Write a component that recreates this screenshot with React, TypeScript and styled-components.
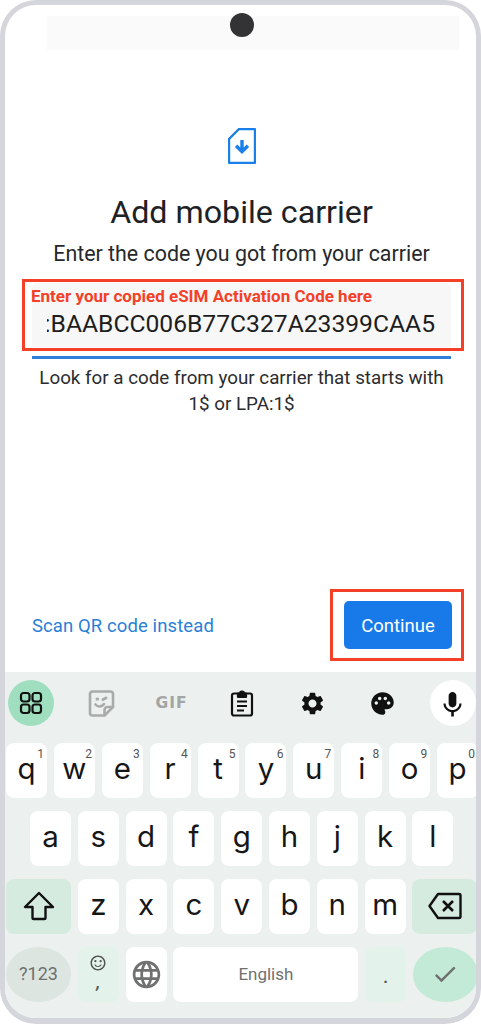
import React from "react";
import styled, { createGlobalStyle } from "styled-components";
import {
  MdSettings,
  MdPalette,
  MdKeyboardVoice,
  MdOutlineSentimentSatisfied,
  MdLanguage,
  MdCheck,
} from "react-icons/md";

const Global = createGlobalStyle`
  html, body { margin: 0; padding: 0; background: #fff; }
  body { font-family: Roboto, "Liberation Sans", sans-serif; }
`;

const Frame = styled.div`
  box-sizing: border-box;
  width: 481px;
  height: 1024px;
  border: 5px solid #d5d5dc;
  border-bottom-width: 6px;
  border-radius: 36px;
  overflow: hidden;
  position: relative;
  display: flex;
  flex-direction: column;
  background: #fff;
`;
const Camera = styled.div`
  position: absolute;
  top: 8px;
  left: 225px;
  width: 24px;
  height: 24px;
  border-radius: 50%;
  background: #333335;
`;
const StatusBar = styled.div`
  height: 34px;
  margin: 11px 17px 0 42px;
  background: #fafafa;
`;
const Main = styled.main`
  flex: 1;
  display: flex;
  flex-direction: column;
  align-items: center;
  padding-top: 78px;
  color: #222;
`;
const CenterBlock = styled.div`
  display: flex;
  flex-direction: column;
  align-items: center;
  padding-left: 2px;
`;
const SimIcon = styled.svg`
  display: block;
  width: 28px;
  height: 36px;
`;
const Title = styled.h1`
  margin: 28px 0 0;
  font-size: 32.2px;
  font-weight: 400;
  line-height: 40px;
  color: #202124;
`;
const Subtitle = styled.p`
  margin: 9px 0 0;
  font-size: 21.4px;
  line-height: 26px;
  color: #27282b;
  white-space: nowrap;
`;
const FieldHighlight = styled.div`
  box-sizing: border-box;
  align-self: flex-start;
  margin: 12px 0 0 17px;
  width: 442px;
  height: 72px;
  border: 3px solid #f44027;
  padding: 1px 10px 0 7px;
`;
const Field = styled.div`
  box-sizing: border-box;
  height: 64px;
  background: #f7f7f8;
  border-radius: 5px 5px 0 0;
  display: flex;
  flex-direction: column;
`;
const RedLabel = styled.div`
  font-size: 17px;
  font-weight: 700;
  line-height: 18px;
  margin: 4px 0 0 -1px;
  color: #f44027;
  white-space: nowrap;
`;
const CodeClip = styled.div`
  display: flex;
  justify-content: flex-end;
  overflow: hidden;
  margin: 4px 16px 0 15px;
`;
const Code = styled.div`
  flex-shrink: 0;
  font-size: 24.65px;
  line-height: 30px;
  color: #1d1d20;
  white-space: nowrap;
`;
const Underline = styled.div`
  align-self: flex-start;
  width: 419px;
  height: 3px;
  margin: 5px 0 0 27px;
  background: #2d7fd8;
`;
const Help = styled.p`
  margin: 6px 0 0;
  padding-left: 2px;
  font-size: 18.8px;
  line-height: 26px;
  text-align: center;
  color: #2b2c2f;
  width: 440px;
`;
const Actions = styled.div`
  align-self: stretch;
  margin-top: auto;
  margin-bottom: 11px;
  display: flex;
  align-items: center;
  justify-content: space-between;
  padding: 0 12px 0 27px;
`;
const ScanLink = styled.a`
  font-size: 18.5px;
  color: #2a7fd6;
  letter-spacing: 0.1px;
  padding-top: 2px;
`;
const ContinueHighlight = styled.div`
  box-sizing: border-box;
  width: 134px;
  height: 72px;
  border: 3px solid #f44027;
  padding: 9px 9px 0 11px;
`;
const ContinueButton = styled.div`
  height: 48px;
  padding-top: 1px;
  box-sizing: border-box;
  border-radius: 5px;
  background: #177ae8;
  color: #fff;
  font-size: 18.5px;
  display: flex;
  align-items: center;
  justify-content: center;
`;
const Keyboard = styled.section`
  height: 346px;
  flex-shrink: 0;
  box-sizing: border-box;
  background: #ecf1ef;
  padding-top: 8px;
  display: flex;
  flex-direction: column;
`;
const Toolbar = styled.div`
  display: flex;
  justify-content: space-between;
  padding-left: 3px;
  margin-bottom: 17px;
`;
const ToolSlot = styled.div<{ $bg?: string; $color?: string }>`
  width: 46px;
  height: 46px;
  border-radius: 50%;
  flex-shrink: 0;
  display: flex;
  align-items: center;
  justify-content: center;
  background: ${(p) => p.$bg || "transparent"};
  color: ${(p) => p.$color || "#111"};
`;
const GifLabel = styled.span`
  font-family: "DejaVu Sans", sans-serif;
  font-size: 15.5px;
  font-weight: 700;
  letter-spacing: 1px;
  color: #a3a5a4;
`;
const Rows = styled.div`
  display: flex;
  flex-direction: column;
  gap: 13.5px;
`;
const Row = styled.div<{ $gap: number; $left: number }>`
  display: flex;
  gap: ${(p) => p.$gap}px;
  padding-left: ${(p) => p.$left}px;
  height: 54.5px;
`;
const Key = styled.div<{ $w?: number; $bg?: string; $round?: boolean; $letter?: boolean }>`
  position: relative;
  box-sizing: border-box;
  flex: 0 0 ${(p) => p.$w ?? 41}px;
  height: 100%;
  padding-bottom: ${(p) => (p.$letter ? 4 : 0)}px;
  border-radius: ${(p) => (p.$round ? "50%" : "8px")};
  background: ${(p) => p.$bg || "#fff"};
  display: flex;
  flex-direction: column;
  align-items: center;
  justify-content: center;
  font-family: Inter, Roboto, sans-serif;
  font-size: 29.5px;
  line-height: 30px;
  color: #161616;
`;
const KeyHint = styled.span`
  position: absolute;
  top: 3px;
  right: 3px;
  font-family: Roboto, sans-serif;
  font-size: 12px;
  line-height: 16px;
  color: #555;
`;
const SmallLabel = styled.span<{ $size: number }>`
  font-family: Roboto, sans-serif;
  font-size: ${(p) => p.$size}px;
  color: #6f7170;
  line-height: 1;
`;
const PeriodMark = styled.span`
  font-family: Roboto, sans-serif;
  font-size: 22px;
  line-height: 1;
  color: #555;
  padding-top: 4px;
`;
const EmojiStack = styled.div`
  display: flex;
  flex-direction: column;
  align-items: center;
  padding-bottom: 5px;
`;
const EmojiComma = styled.span`
  font-family: Roboto, sans-serif;
  font-size: 17px;
  line-height: 16px;
  font-style: italic;
  font-weight: 700;
  color: #555;
  margin-top: 2px;
`;

const top = ["q", "w", "e", "r", "t", "y", "u", "i", "o", "p"];
const hints = ["1", "2", "3", "4", "5", "6", "7", "8", "9", "0"];
const home = ["a", "s", "d", "f", "g", "h", "j", "k", "l"];
const bottom = ["z", "x", "c", "v", "b", "n", "m"];

export default function App() {
  return (
    <>
      <Global />
      <Frame>
        <Camera />
        <StatusBar />
        <Main>
          <CenterBlock>
            <SimIcon viewBox="0 0 28 36" fill="none">
              <path
                d="M27 2v32a1 1 0 0 1-1 1H2a1 1 0 0 1-1-1V11L11 1h15a1 1 0 0 1 1 1z"
                stroke="#1a7fe8"
                strokeWidth="2.400"
                strokeLinejoin="round"
              />
              <path d="M12.300 12h3.400v7.500l3-3 2.400 2.400-7.100 7.100-7.100-7.100 2.400-2.400 3 3z" fill="#1a7fe8" />
            </SimIcon>
            <Title>Add mobile carrier</Title>
            <Subtitle>Enter the code you got from your carrier</Subtitle>
          </CenterBlock>
          <FieldHighlight>
            <Field>
              <RedLabel>Enter your copied eSIM Activation Code here</RedLabel>
              <CodeClip>
                <Code>:BAABCC006B77C327A23399CAA5</Code>
              </CodeClip>
            </Field>
          </FieldHighlight>
          <Underline />
          <Help>
            Look for a code from your carrier that starts with
            <br />
            1$ or LPA:1$
          </Help>
          <Actions>
            <ScanLink>Scan QR code instead</ScanLink>
            <ContinueHighlight>
              <ContinueButton>Continue</ContinueButton>
            </ContinueHighlight>
          </Actions>
        </Main>
        <Keyboard>
          <Toolbar>
            <ToolSlot $bg="#9fdfbf">
              <svg width="24" height="24" viewBox="0 0 24 24" fill="none" stroke="#111" strokeWidth="2.200">
                <rect x="2" y="2" width="8.500" height="8.500" rx="2.500" />
                <rect x="13.500" y="2" width="8.500" height="8.500" rx="2.500" />
                <rect x="2" y="13.500" width="8.500" height="8.500" rx="2.500" />
                <rect x="13.500" y="13.500" width="8.500" height="8.500" rx="2.500" />
              </svg>
            </ToolSlot>
            <ToolSlot>
              <svg width="27" height="27" viewBox="0 0 27 27" fill="none" stroke="#a9abaa" strokeWidth="2.600" strokeLinejoin="round" strokeLinecap="round">
                <path d="M2 4a2.500 2.500 0 0 1 2.500-2.500h18A2.500 2.500 0 0 1 25 4v13l-8.500 8.500h-12A2.500 2.500 0 0 1 2 23z" />
                <path d="M16.500 25v-5a3 3 0 0 1 3-3H25" />
                <path d="M7.500 14.500c2.500 3 6.500 2.500 8.500-.5" />
                <path d="M9 9h.6M15 9.500l3-1.500" strokeWidth="3" />
              </svg>
            </ToolSlot>
            <ToolSlot>
              <GifLabel>GIF</GifLabel>
            </ToolSlot>
            <ToolSlot>
              <svg width="24" height="28" viewBox="0 0 24 28" fill="none" stroke="#111" strokeWidth="2.200" strokeLinejoin="round">
                <rect x="2" y="4.500" width="20" height="22" rx="2" />
                <path d="M8 4.500h2a2 2 0 0 1 4 0h2V8H8z" fill="#111" />
                <path d="M7 12.500h10M7 17h10M7 21.500h7" strokeWidth="1.800" />
              </svg>
            </ToolSlot>
            <ToolSlot>
              <MdSettings size={27} />
            </ToolSlot>
            <ToolSlot>
              <MdPalette size={27} />
            </ToolSlot>
            <ToolSlot $bg="#fff">
              <MdKeyboardVoice size={31} />
            </ToolSlot>
          </Toolbar>
          <Rows>
            <Row $gap={6.9} $left={1}>
              {top.map((k, i) => (
                <Key key={k} $letter>
                  {k}
                  <KeyHint>{hints[i]}</KeyHint>
                </Key>
              ))}
            </Row>
            <Row $gap={6.8} $left={25}>
              {home.map((k) => (
                <Key key={k} $letter>{k}</Key>
              ))}
            </Row>
            <Row $gap={6.8} $left={1}>
              <Key $w={65} $bg="#d5ebe0">
                <svg width="32" height="30" viewBox="0 0 32 30" fill="none" stroke="#111" strokeWidth="2.400" strokeLinejoin="round">
                  <path d="M16 2 2 16h7.500v11a1 1 0 0 0 1 1h11a1 1 0 0 0 1-1V16H30z" />
                </svg>
              </Key>
              {bottom.map((k) => (
                <Key key={k} $letter>{k}</Key>
              ))}
              <Key $w={65} $bg="#d5ebe0">
                <svg width="36" height="28" viewBox="0 0 34 28" fill="none" stroke="#111" strokeWidth="2.400" strokeLinejoin="round">
                  <path d="M10 2h21a1.500 1.500 0 0 1 1.500 1.500v21a1.500 1.500 0 0 1-1.500 1.500H10L1.500 14z" />
                  <path d="m15 9 10 10M25 9 15 19" strokeWidth="2.600" />
                </svg>
              </Key>
            </Row>
            <Row $gap={6.8} $left={1}>
              <Key $w={65} $bg="#dce5e0" $round>
                <SmallLabel $size={18}>?123</SmallLabel>
              </Key>
              <Key $bg="#e3f2ea">
                <EmojiStack>
                  <MdOutlineSentimentSatisfied size={18} color="#555" />
                  <EmojiComma>,</EmojiComma>
                </EmojiStack>
              </Key>
              <Key>
                <MdLanguage size={33} color="#6f7170" />
              </Key>
              <Key $w={185}>
                <SmallLabel $size={17}>English</SmallLabel>
              </Key>
              <Key $bg="#e3f2ea">
                <PeriodMark>.</PeriodMark>
              </Key>
              <Key $w={65} $bg="#c2ead7" $round>
                <MdCheck size={28} color="#6f7170" />
              </Key>
            </Row>
          </Rows>
        </Keyboard>
      </Frame>
    </>
  );
}
